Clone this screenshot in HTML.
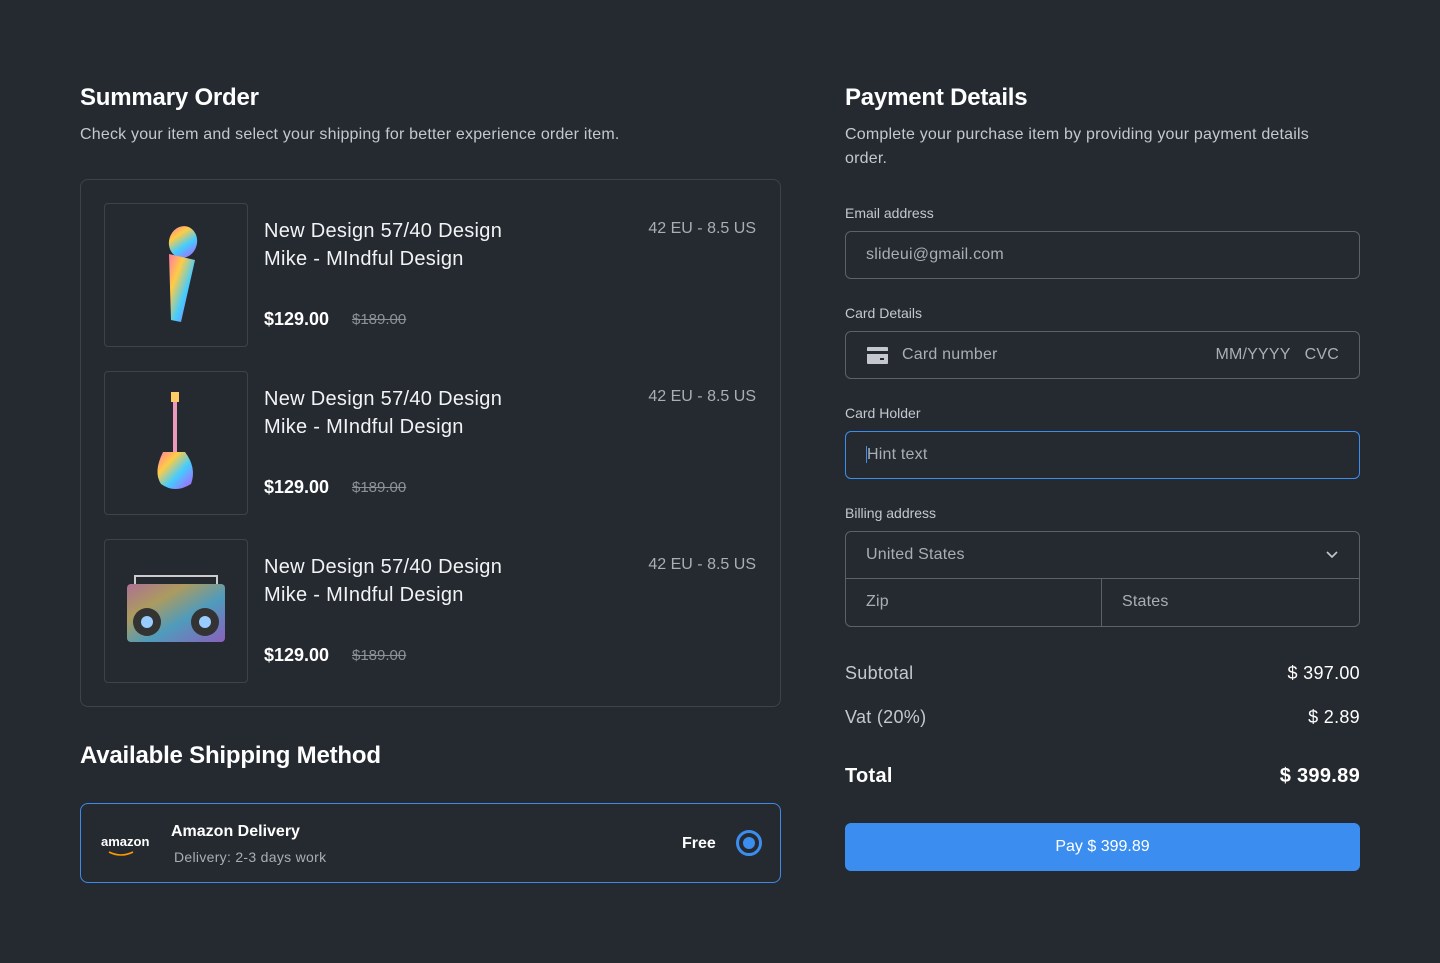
<!DOCTYPE html>
<html><head><meta charset="utf-8"><style>
*{box-sizing:border-box;margin:0;padding:0}
body{width:1440px;height:963px;background:#252a31;font-family:"Liberation Sans",sans-serif;color:#fff;position:relative;overflow:hidden}
.a{position:absolute}
h1{font-size:24px;font-weight:bold;position:absolute;letter-spacing:-0.2px}
.sub{font-size:16px;color:#c4c8ce;position:absolute;letter-spacing:0.2px}
.card{position:absolute;left:80px;top:179px;width:701px;height:528px;border:1px solid #3d434b;border-radius:8px}
.thumb{position:absolute;left:23px;width:144px;height:144px;border:1px solid #3d434b;border-radius:4px}
.t1{position:absolute;left:183px;font-size:20px;line-height:28px;color:#f2f3f5;letter-spacing:0.3px}
.sz{position:absolute;right:24px;font-size:16px;color:#a9aeb5}
.pr{position:absolute;left:183px;font-size:18px;font-weight:bold}
.old{position:absolute;left:271px;font-size:15px;color:#8c9198;text-decoration:line-through}
.lbl{position:absolute;left:845px;font-size:14px;color:#c4c8ce}
.inp{position:absolute;left:845px;width:515px;height:48px;border:1px solid #5c626a;border-radius:6px;font-size:16px;color:#a9aeb5;padding:0 20px;line-height:46px;letter-spacing:0.2px}
.row{position:absolute;left:845px;width:515px;font-size:18px;color:#c4c8ce;letter-spacing:0.3px}
.row span{position:absolute;right:0;color:#fff}
</style></head><body>
<h1 style="left:80px;top:84px">Summary Order</h1>
<div class="sub" style="left:80px;top:126px">Check your item and select your shipping for better experience order item.</div>
<div class="card">
 <div class="thumb" style="top:23px"><svg width="142" height="142"><defs><linearGradient id="g" x1="0" y1="0" x2="1" y2="1"><stop offset="0" stop-color="#f7a"/><stop offset=".3" stop-color="#fc4"/><stop offset=".6" stop-color="#4cf"/><stop offset="1" stop-color="#b5f"/></linearGradient></defs><ellipse cx="78" cy="38" rx="14" ry="16" fill="url(#g)" transform="rotate(15 78 38)"/><path d="M64 50 L90 56 L76 118 L66 116 Z" fill="url(#g)"/></svg></div>
 <div class="t1" style="top:37px">New Design 57/40 Design<br>Mike - MIndful Design</div>
 <div class="sz" style="top:40px">42 EU - 8.5 US</div>
 <div class="pr" style="top:129px">$129.00</div><div class="old" style="top:131px">$189.00</div>

 <div class="thumb" style="top:191px"><svg width="142" height="142"><rect x="68" y="24" width="4" height="64" fill="#e9b"/><rect x="66" y="20" width="8" height="10" fill="#fc6"/><path d="M58 80 Q48 100 56 112 Q70 122 86 112 Q92 96 80 80 Z" fill="url(#g)"/></svg></div>
 <div class="t1" style="top:205px">New Design 57/40 Design<br>Mike - MIndful Design</div>
 <div class="sz" style="top:208px">42 EU - 8.5 US</div>
 <div class="pr" style="top:297px">$129.00</div><div class="old" style="top:299px">$189.00</div>

 <div class="thumb" style="top:359px"><svg width="142" height="142"><rect x="22" y="44" width="98" height="58" rx="4" fill="#5a6a7a"/><rect x="22" y="44" width="98" height="58" rx="4" fill="url(#g)" opacity=".5"/><circle cx="42" cy="82" r="14" fill="#333"/><circle cx="100" cy="82" r="14" fill="#333"/><circle cx="42" cy="82" r="6" fill="#9cf"/><circle cx="100" cy="82" r="6" fill="#9cf"/><path d="M30 44 V36 H112 V44" stroke="#ccc" stroke-width="2" fill="none"/></svg></div>
 <div class="t1" style="top:373px">New Design 57/40 Design<br>Mike - MIndful Design</div>
 <div class="sz" style="top:376px">42 EU - 8.5 US</div>
 <div class="pr" style="top:465px">$129.00</div><div class="old" style="top:467px">$189.00</div>
</div>
<h1 style="left:80px;top:742px">Available Shipping Method</h1>
<div class="a" style="left:80px;top:803px;width:701px;height:80px;border:1px solid #3f8ae8;border-radius:8px">
 <div class="a" style="left:20px;top:30px;font-size:13px;font-weight:bold">amazon</div>
 <svg class="a" style="left:26px;top:46px" width="30" height="8"><path d="M2 2 Q14 8 26 2" stroke="#f90" stroke-width="1.6" fill="none"/></svg>
 <div class="a" style="left:90px;top:19px;font-size:16px;font-weight:bold">Amazon Delivery</div>
 <div class="a" style="left:93px;top:45px;font-size:14px;color:#a9aeb5;letter-spacing:0.3px">Delivery: 2-3 days work</div>
 <div class="a" style="left:601px;top:31px;font-size:16px;font-weight:bold">Free</div>
 <div class="a" style="left:655px;top:26px;width:26px;height:26px;border:3px solid #3b8ef0;border-radius:50%"><div style="margin:4px;width:12px;height:12px;border-radius:50%;background:#3b8ef0"></div></div>
</div>

<h1 style="left:845px;top:84px">Payment Details</h1>
<div class="sub" style="left:845px;width:495px;line-height:24px;top:123px">Complete your purchase item by providing your payment details order.</div>
<div class="lbl" style="top:205px">Email address</div>
<div class="inp" style="top:231px">slideui@gmail.com</div>
<div class="lbl" style="top:305px">Card Details</div>
<div class="inp" style="top:331px;padding-left:56px">Card number<span style="position:absolute;right:20px">MM/YYYY&nbsp;&nbsp;&nbsp;CVC</span>
 <svg class="a" style="left:21px;top:15px" width="21" height="17"><rect width="21" height="17" rx="1" fill="#c4c8ce"/><rect y="4" width="21" height="3" fill="#252a31"/><rect x="13" y="11" width="4" height="2" fill="#252a31"/></svg></div>
<div class="lbl" style="top:405px">Card Holder</div>
<div class="inp" style="top:431px;border-color:#3b8ef0"><span style="border-left:1px solid #3b8ef0">Hint text</span></div>
<div class="lbl" style="top:505px">Billing address</div>
<div class="inp" style="top:531px;height:96px;padding:0">
 <div style="padding-left:20px;height:47px;border-bottom:1px solid #5c626a">United States</div>
 <svg class="a" style="right:20px;top:18px" width="14" height="10"><path d="M2 2 L7 7 L12 2" stroke="#c4c8ce" stroke-width="1.6" fill="none"/></svg>
 <div class="a" style="left:0;top:47px;width:256px;height:47px;border-right:1px solid #5c626a;padding-left:20px">Zip</div>
 <div class="a" style="left:276px;top:47px">States</div>
</div>
<div class="row" style="top:663px">Subtotal<span>$ 397.00</span></div>
<div class="row" style="top:707px">Vat (20%)<span>$ 2.89</span></div>
<div class="row" style="top:765px;font-size:20px;font-weight:bold;color:#fff">Total<span>$ 399.89</span></div>
<div class="a" style="left:845px;top:823px;width:515px;height:48px;background:#3b8ef0;border-radius:6px;text-align:center;line-height:48px;font-size:16px">Pay $ 399.89</div>
</body></html>
